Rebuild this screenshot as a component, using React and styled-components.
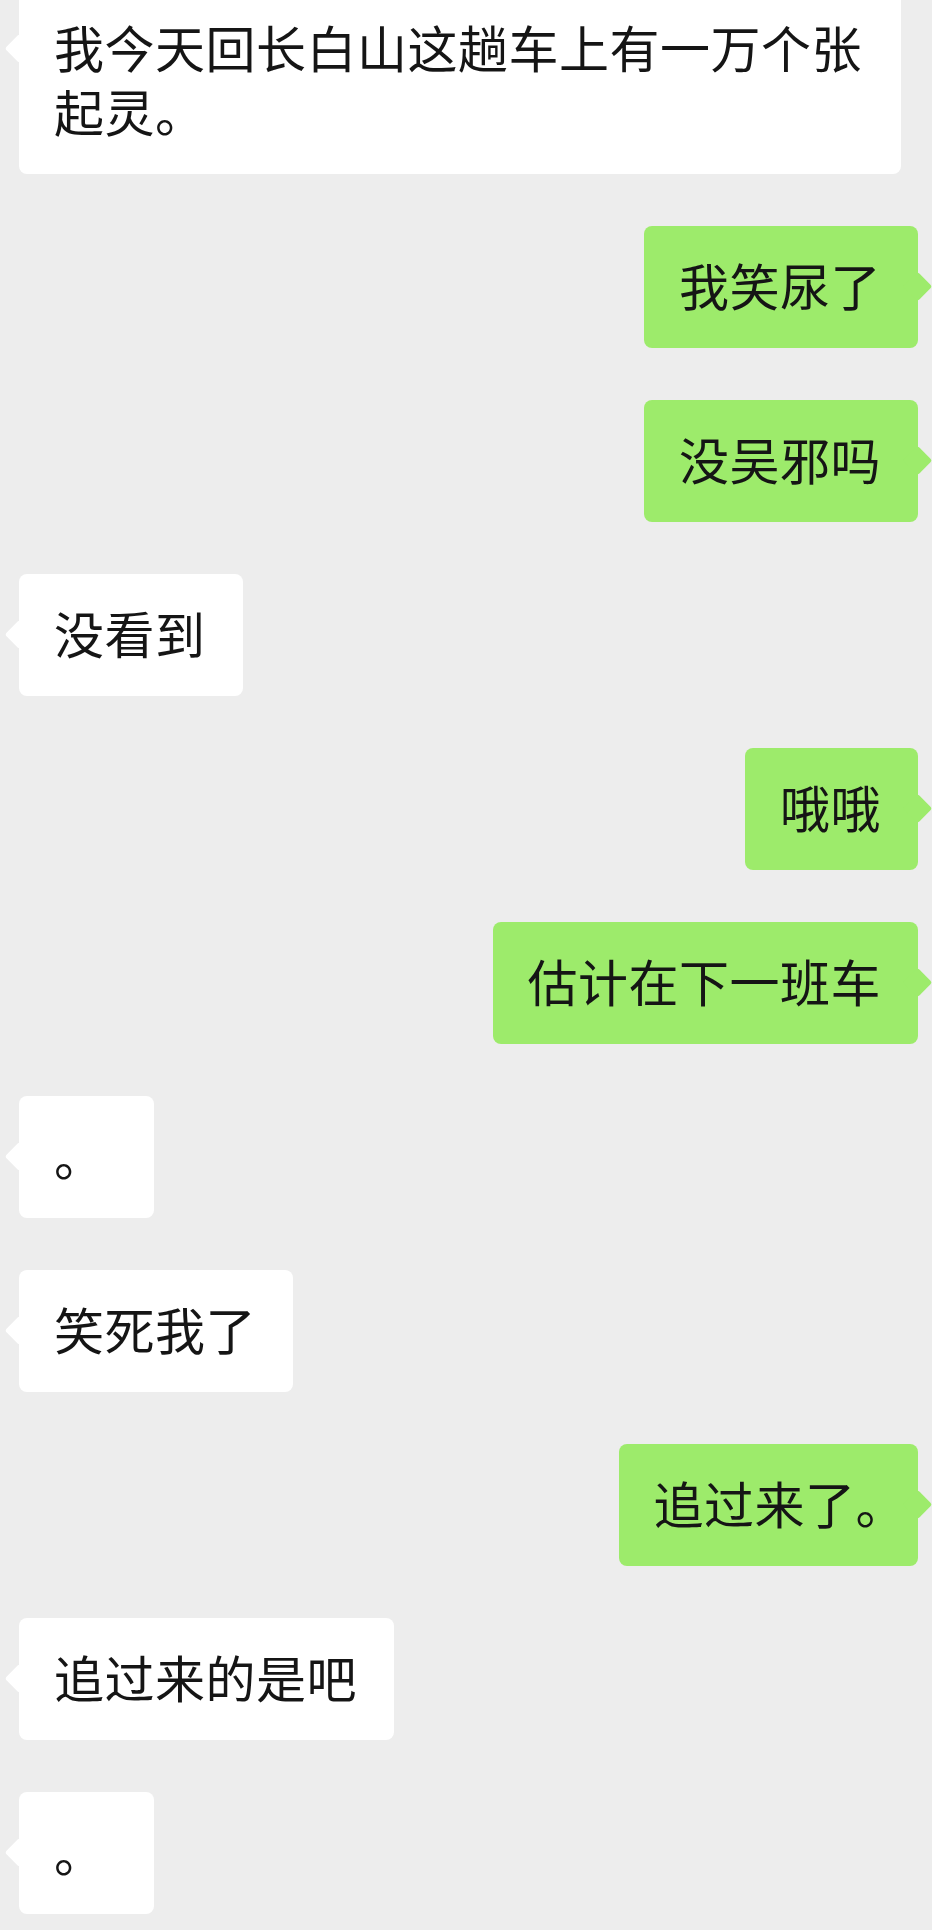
import React from "react"
import styled, { createGlobalStyle } from "styled-components"

const Global = createGlobalStyle`
  html, body {
    margin: 0;
    padding: 0;
    background: #ededed;
  }
  body {
    font-family: "Noto Sans CJK SC", "Noto Sans", sans-serif;
  }
`

const Chat = styled.div`
  display: flex;
  flex-direction: column;
  gap: 52px;
  margin-top: -12px;
  padding-bottom: 16px;
  min-height: 1942px;
  box-sizing: border-box;
  background: #ededed;
`

const Row = styled.div`
  display: flex;
  justify-content: ${p => (p.$mine ? "flex-end" : "flex-start")};
  padding: ${p => (p.$mine ? "0 14px 0 0" : "0 0 0 19px")};
`

const Bubble = styled.div`
  position: relative;
  box-sizing: border-box;
  max-width: 882px;
  min-width: 135px;
  padding: 26px 37px 32px 35px;
  border-radius: 8px;
  background: ${p => (p.$mine ? "#9deb6b" : "#ffffff")};
  color: #151515;
  font-size: 50px;
  letter-spacing: 0.5px;
  line-height: 64px;

  &::before {
    content: "";
    position: absolute;
    top: 50px;
    width: 21px;
    height: 21px;
    border-radius: 3px;
    background: inherit;
    transform: rotate(45deg);
    ${p => (p.$mine ? "right: -10px;" : "left: -10px;")}
  }
`

const Text = styled.span`
  position: relative;
`

const Punct = styled.span`
  font-feature-settings: "halt";
`

const messages = [
  { mine: false, text: "我今天回长白山这趟车上有一万个张起灵。" },
  { mine: true, text: "我笑尿了" },
  { mine: true, text: "没吴邪吗" },
  { mine: false, text: "没看到" },
  { mine: true, text: "哦哦" },
  { mine: true, text: "估计在下一班车" },
  { mine: false, text: "。" },
  { mine: false, text: "笑死我了" },
  { mine: true, text: "追过来了", end: "。" },
  { mine: false, text: "追过来的是吧" },
  { mine: false, text: "。" },
]

const App = () => {
  return (
    <>
      <Global />
      <Chat>
        {messages.map((m, i) => (
          <Row key={i} $mine={m.mine}>
            <Bubble $mine={m.mine}>
              <Text>
                {m.text}
                {m.end && <Punct>{m.end}</Punct>}
              </Text>
            </Bubble>
          </Row>
        ))}
      </Chat>
    </>
  )
}

export default App
